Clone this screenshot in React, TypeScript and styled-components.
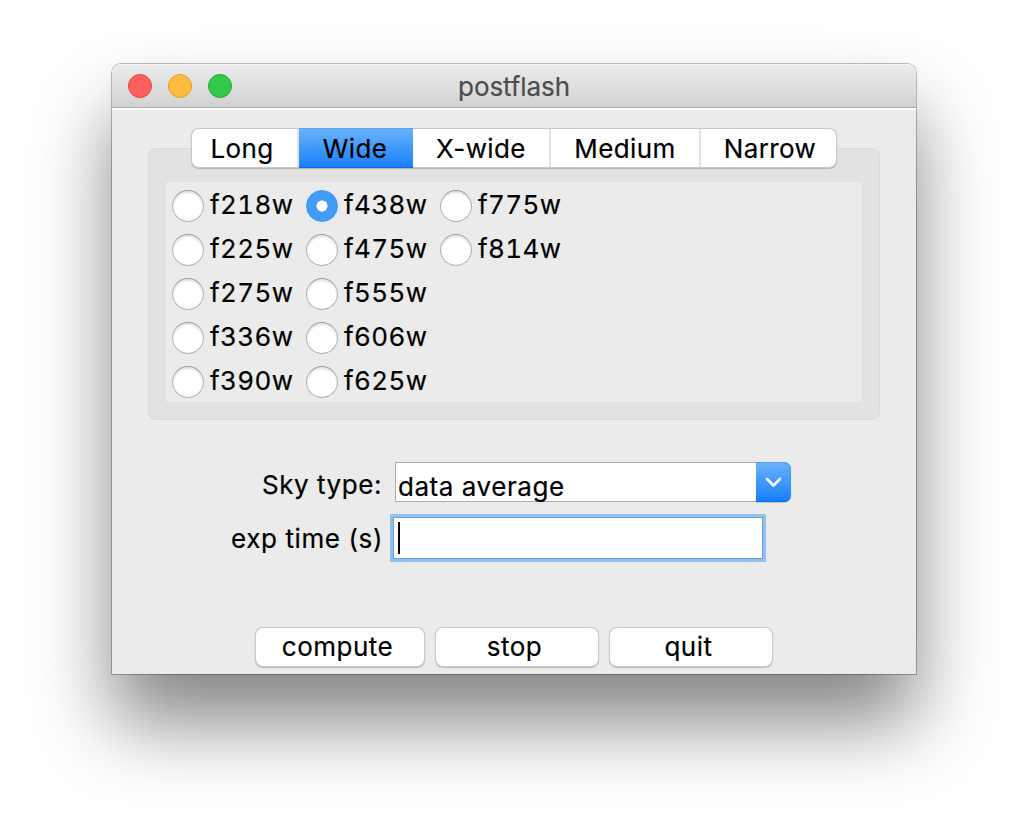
import React, { useState } from "react";
import styled, { createGlobalStyle, css } from "styled-components";

const GlobalStyle = createGlobalStyle`
  * { box-sizing: border-box; }
  body { margin: 0; background: #fff; }
`;

const Desktop = styled.div`
  width: 1028px;
  height: 834px;
  padding: 64px 112px 0;
  overflow: hidden;
  font-family: Inter, "Liberation Sans", sans-serif;
  font-size: 26px;
  line-height: 32px;
  -webkit-text-stroke: 0.2px;
  color: #000;
`;

const Window = styled.main`
  width: 804px;
  height: 610px;
  display: flex;
  flex-direction: column;
  background: #ebebeb;
  border-radius: 9px 9px 0 0;
  box-shadow: 0 0 0 1px rgba(0, 0, 0, 0.26), 0 49px 78px rgba(0, 0, 0, 0.48);
`;

const TitleBar = styled.header`
  display: grid;
  grid-template-columns: 1fr auto 1fr;
  align-items: center;
  height: 44px;
  padding: 0 16px;
  border-bottom: 1px solid #a9a9a9;
  border-radius: 9px 9px 0 0;
  background: linear-gradient(#ececec, #d2d2d2);
  box-shadow: inset 0 1px 0 #f6f6f6, 0 2px 0 #fff;
`;

const Lights = styled.div`
  display: flex;
  gap: 16px;
`;

const Light = styled.span<{ $fill: string; $edge: string }>`
  width: 24px;
  height: 24px;
  border-radius: 50%;
  background: ${(p) => p.$fill};
  border: 1px solid ${(p) => p.$edge};
`;

const Title = styled.h1`
  margin: 2px 0 0;
  font-size: 26px;
  font-weight: 400;
  letter-spacing: -0.1px;
  color: #4d4d4d;
`;

const Content = styled.div`
  flex: 1;
  display: flex;
  flex-direction: column;
  padding: 21px 36px 8px;
`;

const TabBar = styled.div`
  display: grid;
  grid-template-columns: 107px 114px 138px 150px 135px;
  height: 38px;
  width: 644px;
  margin: 0 auto -19px 44px;
  z-index: 1;
  border-radius: 7px;
  background: #fff;
  box-shadow: 0 0 0 1px #c8c8c8, 0 1px 1px 1px rgba(0, 0, 0, 0.2);
`;

const Tab = styled.button<{ $active: boolean }>`
  height: 38px;
  padding: 2px 0 0;
  border: 0;
  border-right: 2px solid #e3e3e3;
  background: none;
  font: inherit;
  letter-spacing: 0.4px;
  color: #000;
  &:first-child { padding-right: 5px; }
  &:last-child { border-right: 0; padding-left: 3px; }
  ${(p) =>
    p.$active &&
    css`
      height: 40px;
      margin: -1px 0;
      padding-right: 2px;
      border-right: 0;
      background: linear-gradient(#6cb3fa, #157efb);
      box-shadow: inset 0 1px 0 #57a4f5, inset 0 -1px 0 #0d66f5;
    `}
`;

const Group = styled.section`
  height: 272px;
  padding: 33px 17px 17px;
  background: #e2e2e2;
  border: 1px solid #dadada;
  border-radius: 8px;
`;

const Filters = styled.div`
  display: grid;
  grid-template-columns: repeat(3, 134px);
  grid-template-rows: repeat(5, 44px);
  grid-auto-flow: column;
  height: 220px;
  padding-left: 6px;
  background: #ebebeb;
`;

const Option = styled.label`
  display: flex;
  align-items: center;
  gap: 6px;
  padding-top: 4px;
  font-variant-numeric: tabular-nums;
  letter-spacing: 0.4px;
  & > span { margin-top: -3px; }
`;

const Radio = styled.input`
  appearance: none;
  flex: none;
  width: 32px;
  height: 32px;
  margin: 0;
  border: 1px solid #b4b4b4;
  border-top-color: #999;
  border-radius: 50%;
  background: #fff;
  box-shadow: inset 0 2px 2px rgba(0, 0, 0, 0.12);
  &:checked {
    border-color: #3f97f6;
    background: radial-gradient(circle, #fff 5px, #419bf9 6px);
    box-shadow: none;
  }
`;

const Form = styled.div`
  display: grid;
  grid-template-columns: 234px 401px;
  column-gap: 8px;
  margin-top: 42px;
`;

const FieldLabel = styled.label<{ $row: number }>`
  text-align: right;
  letter-spacing: ${(p) => (p.$row === 1 ? 0.55 : 0.6)}px;
  margin-top: ${(p) => (p.$row === 1 ? 7 : 9)}px;
  margin-right: ${(p) => (p.$row === 1 ? 0 : -1)}px;
`;

const Combo = styled.div`
  display: flex;
  width: 396px;
  height: 40px;
  margin: 0 0 12px 5px;
`;

const ComboValue = styled.div`
  flex: 1;
  padding: 8px 0 0 2px;
  border: 1px solid #acacac;
  border-right: 0;
  background: #fff;
  line-height: 32px;
  letter-spacing: 0.55px;
`;

const ComboButton = styled.button`
  display: flex;
  align-items: center;
  justify-content: center;
  width: 35px;
  padding: 0;
  border: 0;
  border-radius: 0 7px 7px 0;
  background: linear-gradient(#6cb3fa, #157efb);
  box-shadow: inset -1px 1px 0 rgba(60, 145, 242, 0.6), inset 0 -1px 0 #0d66f5, 0 1px 1px rgba(0, 0, 0, 0.15);
`;

const Entry = styled.div`
  width: 376px;
  height: 48px;
  padding: 4px;
  border: 3px solid #92c1f0;
  box-shadow: inset 0 0 0 1px #69a1d5;
  background: #fff;
`;

const Caret = styled.div`
  width: 2px;
  height: 32px;
  margin: 1px 0 0 1px;
  background: #000;
`;

const Buttons = styled.div`
  display: flex;
  gap: 12px;
  margin: auto 0 0 108px;
`;

const PushButton = styled.button<{ $width: number }>`
  width: ${(p) => p.$width}px;
  height: 38px;
  padding: 0 5px 0 0;
  border: 0;
  border-radius: 7px;
  background: #fff;
  box-shadow: 0 0 0 1px #c8c8c8, 0 1px 1px 1px rgba(0, 0, 0, 0.2);
  font: inherit;
  letter-spacing: 0.5px;
  color: #000;
`;

const TABS = ["Long", "Wide", "X-wide", "Medium", "Narrow"];
const FILTERS = [
  "f218w", "f225w", "f275w", "f336w", "f390w",
  "f438w", "f475w", "f555w", "f606w", "f625w",
  "f775w", "f814w",
];

export default function App() {
  const [tab, setTab] = useState("Wide");
  const [filter, setFilter] = useState("f438w");
  return (
    <Desktop>
      <GlobalStyle />
      <Window>
        <TitleBar>
          <Lights>
            <Light $fill="#fc605c" $edge="#e2463f" />
            <Light $fill="#fdbc40" $edge="#dfa023" />
            <Light $fill="#34c84a" $edge="#24a732" />
          </Lights>
          <Title>postflash</Title>
        </TitleBar>
        <Content>
          <TabBar>
            {TABS.map((t) => (
              <Tab key={t} $active={t === tab} onClick={() => setTab(t)}>{t}</Tab>
            ))}
          </TabBar>
          <Group>
            <Filters>
              {FILTERS.map((f) => (
                <Option key={f}>
                  <Radio type="radio" name="filter" checked={f === filter} onChange={() => setFilter(f)} />
                  <span>{f}</span>
                </Option>
              ))}
            </Filters>
          </Group>
          <Form>
            <FieldLabel $row={1}>Sky type:</FieldLabel>
            <Combo>
              <ComboValue>data average</ComboValue>
              <ComboButton aria-label="Choose sky type">
                <svg width="17" height="11" viewBox="0 0 17 11" fill="none" stroke="#fff" strokeWidth="2.6" strokeLinecap="round" strokeLinejoin="round">
                  <path d="M2 2l6.5 6.5L15 2" />
                </svg>
              </ComboButton>
            </Combo>
            <FieldLabel $row={2}>exp time (s)</FieldLabel>
            <Entry><Caret /></Entry>
          </Form>
          <Buttons>
            <PushButton $width={168}>compute</PushButton>
            <PushButton $width={162}>stop</PushButton>
            <PushButton $width={162}>quit</PushButton>
          </Buttons>
        </Content>
      </Window>
    </Desktop>
  );
}
